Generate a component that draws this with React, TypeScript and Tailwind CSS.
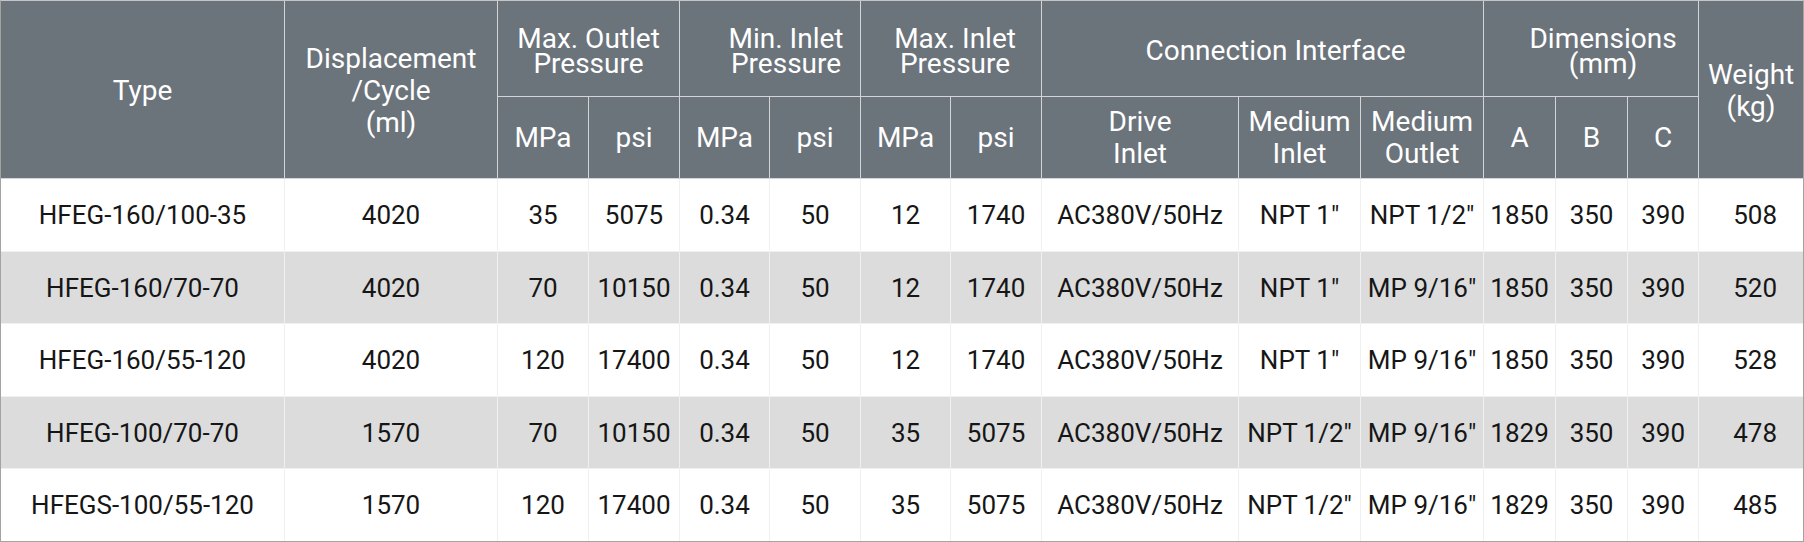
import React from "react";

const widths = [284, 213, 91, 91, 90, 91, 90, 91, 197, 122, 123, 72, 72, 71, 104];

const rows = [
  ["HFEG-160/100-35", "4020", "35", "5075", "0.34", "50", "12", "1740", "AC380V/50Hz", 'NPT 1"', 'NPT 1/2"', "1850", "350", "390", "508"],
  ["HFEG-160/70-70", "4020", "70", "10150", "0.34", "50", "12", "1740", "AC380V/50Hz", 'NPT 1"', 'MP 9/16"', "1850", "350", "390", "520"],
  ["HFEG-160/55-120", "4020", "120", "17400", "0.34", "50", "12", "1740", "AC380V/50Hz", 'NPT 1"', 'MP 9/16"', "1850", "350", "390", "528"],
  ["HFEG-100/70-70", "1570", "70", "10150", "0.34", "50", "35", "5075", "AC380V/50Hz", 'NPT 1/2"', 'MP 9/16"', "1829", "350", "390", "478"],
  ["HFEGS-100/55-120", "1570", "120", "17400", "0.34", "50", "35", "5075", "AC380V/50Hz", 'NPT 1/2"', 'MP 9/16"', "1829", "350", "390", "485"],
];

const rowHeights = ["h-[73px]", "h-[72px]", "h-[73px]", "h-[72px]", "h-[72px]"];

export default function App() {
  const th = "border-r border-b border-[#d3d5d8] p-0 text-center align-middle font-normal";
  return (
    <div className="w-[1804px] h-[542px] border border-[#a3a3a3] border-t-[#c4c6c8] bg-white font-['Roboto',sans-serif]">
      <table className="w-full table-fixed border-separate border-spacing-0">
        <colgroup>
          {widths.map((w, i) => (
            <col key={i} style={{ width: w }} />
          ))}
        </colgroup>
        <thead className="bg-[#6b737b] text-white text-[28px]">
          <tr className="h-[96px]">
            <th rowSpan={2} className={`${th} leading-[32px] pt-[2px]`}>Type</th>
            <th rowSpan={2} className={`${th} leading-[32px] pt-[3px]`}>
              Displacement
              <br />/Cycle
              <br />(ml)
            </th>
            <th colSpan={2} className={`${th} leading-[25px] pt-[4px]`}>
              Max. Outlet
              <br />Pressure
            </th>
            <th colSpan={2} className={`${th} leading-[25px] pt-[4px] pl-[32px]`}>
              Min. Inlet
              <br />Pressure
            </th>
            <th colSpan={2} className={`${th} leading-[25px] pt-[4px] pl-[8px]`}>
              Max. Inlet
              <br />Pressure
            </th>
            <th colSpan={3} className={`${th} leading-[25px] pt-[4px] pl-[26px]`}>Connection Interface</th>
            <th colSpan={3} className={`${th} leading-[25px] pt-[4px] pl-[24px]`}>
              Dimensions
              <br />(mm)
            </th>
            <th rowSpan={2} className="border-b border-[#d3d5d8] p-0 pt-[2px] text-center align-middle font-normal leading-[32px]">
              Weight
              <br />(kg)
            </th>
          </tr>
          <tr className="h-[82px] leading-[32px]">
            <th className={th}>MPa</th>
            <th className={th}>psi</th>
            <th className={th}>MPa</th>
            <th className={th}>psi</th>
            <th className={th}>MPa</th>
            <th className={th}>psi</th>
            <th className={th}>
              Drive
              <br />Inlet
            </th>
            <th className={th}>
              Medium
              <br />Inlet
            </th>
            <th className={th}>
              Medium
              <br />Outlet
            </th>
            <th className={th}>A</th>
            <th className={th}>B</th>
            <th className={th}>C</th>
          </tr>
        </thead>
        <tbody className="text-[26px] text-[#161616]">
          {rows.map((r, ri) => (
            <tr key={ri} className={`${rowHeights[ri]} ${ri % 2 === 1 ? "bg-[#dcdcdc]" : "bg-white"}`}>
              {r.map((c, ci) => (
                <td
                  key={ci}
                  className={`p-0 text-center align-middle whitespace-nowrap leading-none border-[#f0f0f0] ${ci < r.length - 1 ? "border-r" : ""} ${ri < rows.length - 1 ? "border-b" : ""} ${ci === 14 ? "pl-[8px]" : ""}`}
                >
                  {c}
                </td>
              ))}
            </tr>
          ))}
        </tbody>
      </table>
    </div>
  );
}
